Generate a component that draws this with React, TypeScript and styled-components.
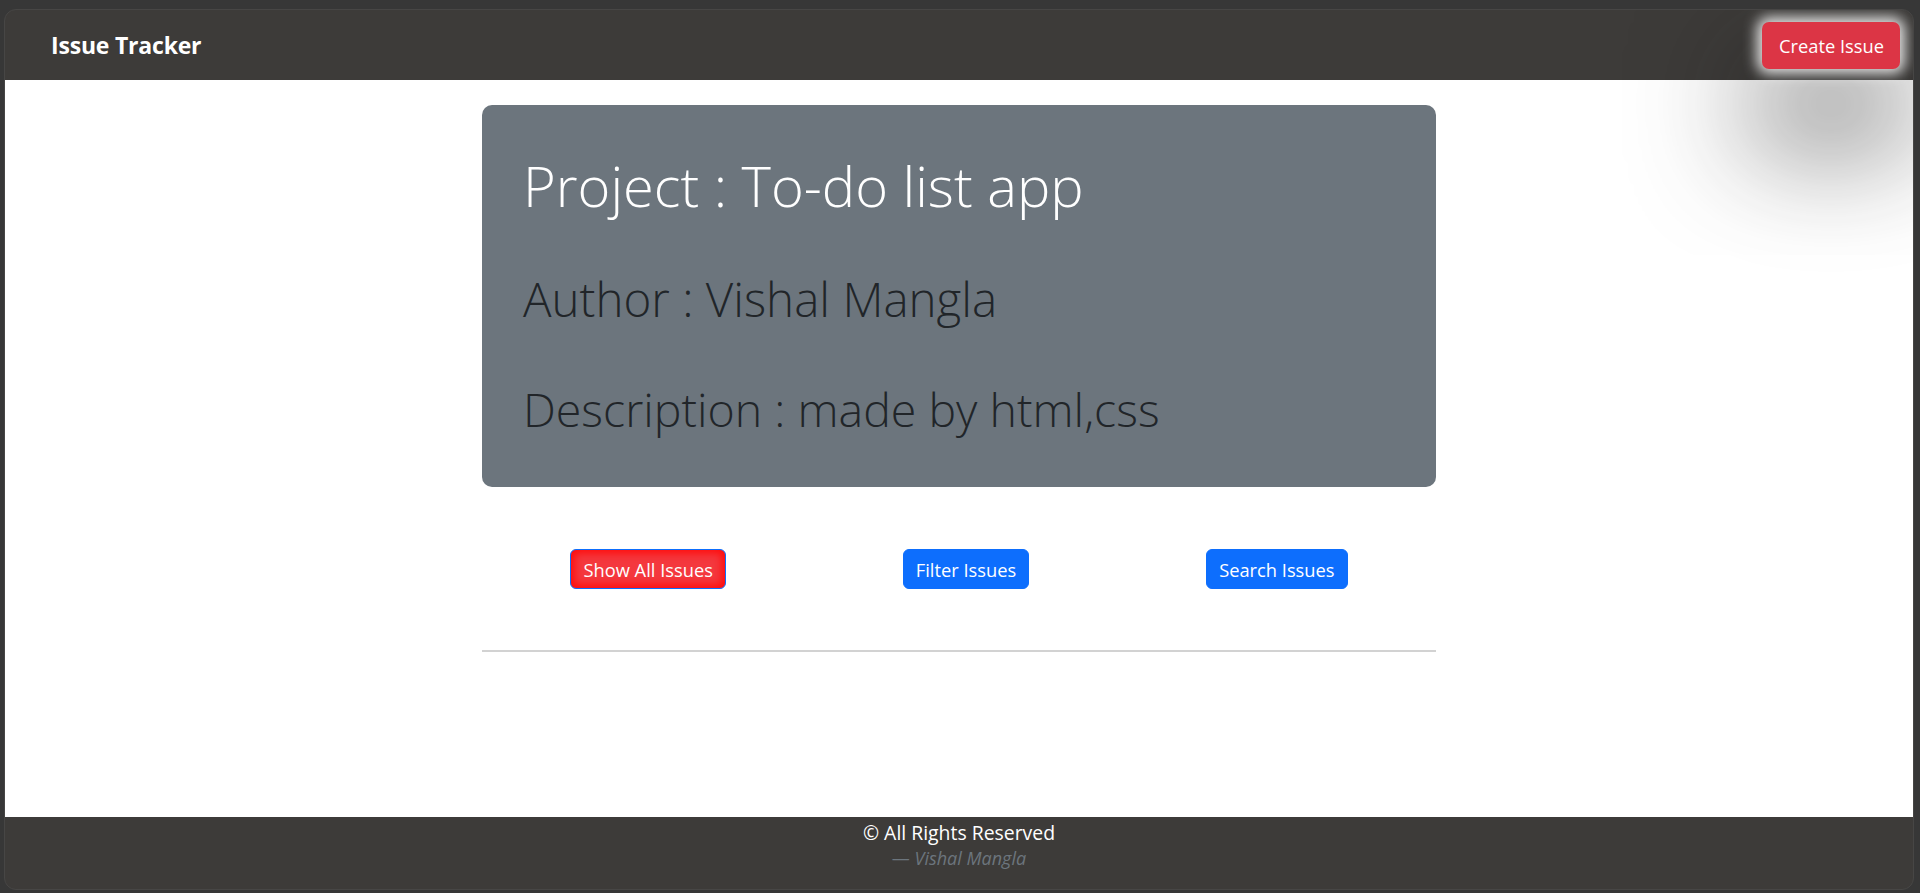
import React from "react";
import styled, { createGlobalStyle } from "styled-components";

const Global = createGlobalStyle`
  html, body {
    margin: 0;
    padding: 0;
    background: #373737;
  }
  body {
    font-family: "Open Sans", "Noto Sans", sans-serif;
  }
  *, *::before, *::after { box-sizing: border-box; }
`;

const Frame = styled.div`
  margin: 9px 6px 0 4px;
  height: calc(100vh - 12px);
  border: 1px solid #474645;
  border-radius: 12px;
  background: #3d3b39;
  overflow: hidden;
  display: flex;
  flex-direction: column;
`;

const NavBar = styled.nav`
  height: 70px;
  flex: none;
  display: flex;
  align-items: center;
  justify-content: space-between;
  padding: 0 13px 0 46px;
`;

const Brand = styled.a`
  color: #fff;
  font-size: 23px;
  font-weight: 700;
  text-decoration: none;
  letter-spacing: -0.2px;
`;

const CreateButton = styled.button`
  position: relative;
  z-index: 2;
  height: 47px;
  padding: 0 16px 0 17px;
  border: none;
  border-radius: 7px;
  background: #dc3545;
  color: #fff;
  font-family: inherit;
  font-size: 18.3px;
  box-shadow: 0 0 14px 5px rgba(255, 255, 255, 0.88),
    0 58px 120px 8px rgba(20, 20, 20, 0.8);
`;

const Main = styled.main`
  flex: 1;
  background: #fff;
  display: flex;
  flex-direction: column;
  align-items: center;
  padding-top: 25px;
`;

const Card = styled.section`
  width: 50%;
  background: #6c757d;
  border-radius: 10px;
  padding: 47px 41px 50px;
  display: flex;
  flex-direction: column;
`;

const Line = styled.h1<{ $size: number; $gap?: number; $light?: boolean }>`
  margin: ${(p) => p.$gap ?? 0}px 0 0;
  font-size: ${(p) => p.$size}px;
  line-height: 1.2;
  font-weight: 300;
  color: ${(p) => (p.$light ? "#fff" : "#212529")};
  white-space: nowrap;
`;

const Actions = styled.div`
  width: 50%;
  display: flex;
  justify-content: space-around;
  margin-top: 62px;
`;

const ActionButton = styled.button<{ $active?: boolean }>`
  height: 40px;
  padding: 0 12px;
  border-radius: 6px;
  border: 1px solid #0d6efd;
  background: ${(p) => (p.$active ? "#f4383e" : "#0d6efd")};
  box-shadow: ${(p) => (p.$active ? "inset 0 0 8px 3px #ff0a0a" : "none")};
  color: #fff;
  font-family: inherit;
  font-size: 18.3px;
`;

const Divider = styled.hr`
  width: 50%;
  margin: 61px 0 0;
  border: none;
  height: 2px;
  background: #d2d2d2;
`;

const Footer = styled.footer`
  height: 72px;
  flex: none;
  display: flex;
  flex-direction: column;
  align-items: center;
  padding-top: 3px;
`;

const Rights = styled.p`
  margin: 0;
  color: #fff;
  font-size: 19.4px;
  line-height: 26px;
`;

const Signature = styled.p`
  margin: 0;
  color: #6c757d;
  font-size: 18px;
  font-style: italic;
  line-height: 24px;
  &::before {
    content: "— ";
    font-style: normal;
  }
`;

export default function App() {
  return (
    <>
      <Global />
      <Frame>
        <NavBar>
          <Brand href="#">Issue Tracker</Brand>
          <CreateButton>Create Issue</CreateButton>
        </NavBar>
        <Main>
          <Card>
            <Line $size={56} $light>
              Project : To-do list app
            </Line>
            <Line $size={47.5} $gap={51}>
              Author : Vishal Mangla
            </Line>
            <Line $size={46.5} $gap={54.5}>
              Description : made by html,css
            </Line>
          </Card>
          <Actions>
            <ActionButton $active>Show All Issues</ActionButton>
            <ActionButton>Filter Issues</ActionButton>
            <ActionButton>Search Issues</ActionButton>
          </Actions>
          <Divider />
        </Main>
        <Footer>
          <Rights>© All Rights Reserved</Rights>
          <Signature>Vishal Mangla</Signature>
        </Footer>
      </Frame>
    </>
  );
}
